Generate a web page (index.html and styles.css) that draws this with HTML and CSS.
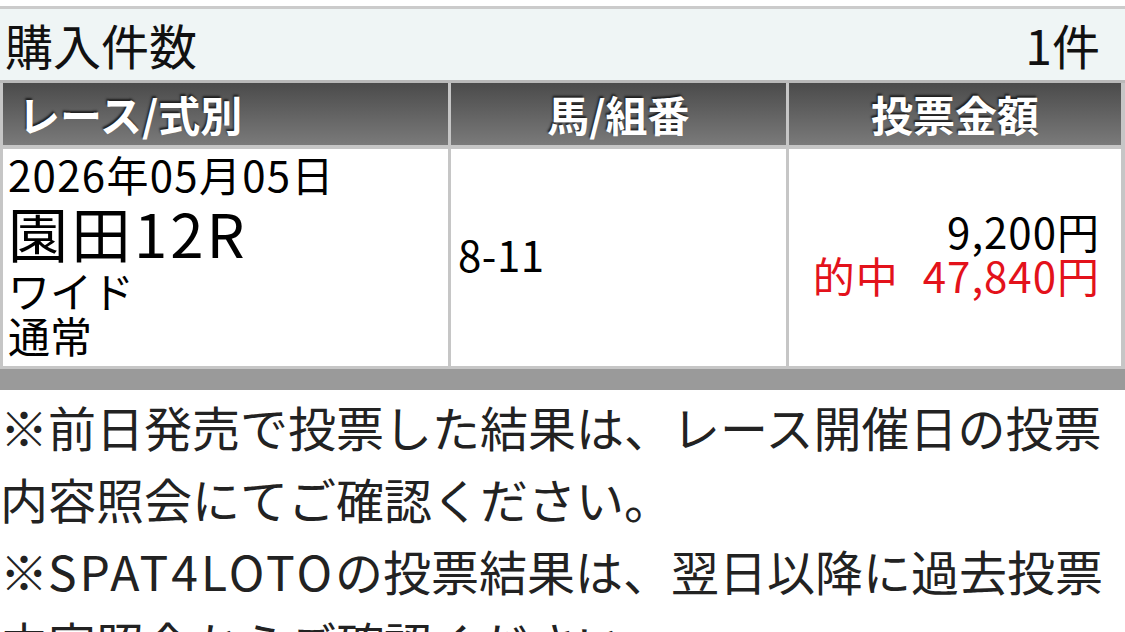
FILE: index.html
```html
<!DOCTYPE html>
<html lang="ja">
<head>
<meta charset="utf-8">
<title>購入件数</title>
<link rel="stylesheet" href="styles.css">
</head>
<body>
<div class="page">
  <div class="top-gap"></div>
  <div class="summary">
    <span class="summary-label">購入件数</span>
    <span class="summary-value">1件</span>
  </div>
  <div class="ticket">
    <div class="th th-left">レース/式別</div>
    <div class="th th-center">馬/組番</div>
    <div class="th th-center">投票金額</div>
    <div class="td td-race">
      <div class="race-date">2026年05月05日</div>
      <div class="race-name">園田12R</div>
      <div class="race-type">ワイド</div>
      <div class="race-kind">通常</div>
    </div>
    <div class="td td-combo">8-11</div>
    <div class="td td-amount">
      <div class="amount">9,200円</div>
      <div class="hit"><span class="hit-label">的中</span>47,840円</div>
    </div>
  </div>
  <div class="band"></div>
  <div class="notes">
    <p class="note">※前日発売で投票した結果は、レース開催日の投票内容照会にてご確認ください。</p>
    <p class="note">※<span class="latin">SPAT4LOTO</span>の投票結果は、翌日以降に過去投票内容照会からご確認ください。</p>
  </div>
</div>
</body>
</html>
```

FILE: styles.css
```css
html, body {
  margin: 0;
  padding: 0;
  background: #ffffff;
}

body {
  font-family: "Noto Sans CJK JP", "Noto Sans", sans-serif;
  color: #000;
  overflow: hidden;
}

.page {
  width: 1125px;
}

.top-gap {
  height: 6px;
  background: #ffffff;
}

.summary {
  height: 71px;
  box-sizing: content-box;
  border-top: 3px solid #cbcbcb;
  border-bottom: 3px solid #b9b9b9;
  background: #eff5f5;
  display: flex;
  align-items: center;
  justify-content: space-between;
  padding: 0 25px 0 5px;
  font-size: 48px;
  line-height: 71px;
  color: #111;
}

.ticket {
  display: grid;
  grid-template-columns: 445px 335px 332px;
  grid-template-rows: 62px 217px;
  column-gap: 3px;
  row-gap: 4px;
  padding: 0 4px 3px 3px;
  background: #c6c6c6;
}

.th {
  background: linear-gradient(#4b4b4b, #7a7a7a);
  color: #fff;
  font-weight: 700;
  font-size: 42px;
  line-height: 62px;
  display: flex;
  align-items: center;
  text-shadow: -1px -2px 2px #1e1e1e;
}

.th-left {
  padding-left: 15px;
}

.th-center {
  justify-content: center;
}

.td {
  background: #fff;
  font-size: 42px;
  color: #000;
}

.td-race {
  padding: 2px 5px 0 5px;
  display: flex;
  flex-direction: column;
}

.race-date {
  line-height: 46px;
  letter-spacing: 1.3px;
}

.race-name {
  font-size: 60px;
  line-height: 70px;
  letter-spacing: 3px;
}

.race-type,
.race-kind {
  line-height: 45px;
}

.td-combo {
  display: flex;
  align-items: center;
  padding: 0 0 7px 7px;
  line-height: 44px;
  letter-spacing: 0.5px;
}

.td-amount {
  display: flex;
  flex-direction: column;
  justify-content: center;
  align-items: flex-end;
  padding: 0 21px 10px 0;
  line-height: 44px;
  letter-spacing: 1px;
}

.hit {
  color: #e3121b;
}

.hit-label {
  margin-right: 24px;
}

.band {
  height: 21px;
  background: #9a9a9a;
}

.notes {
  width: 1110px;
}

.note {
  margin: 0;
  font-size: 48px;
  line-height: 72px;
  color: #222;
}

.latin {
  letter-spacing: 3px;
}
```
